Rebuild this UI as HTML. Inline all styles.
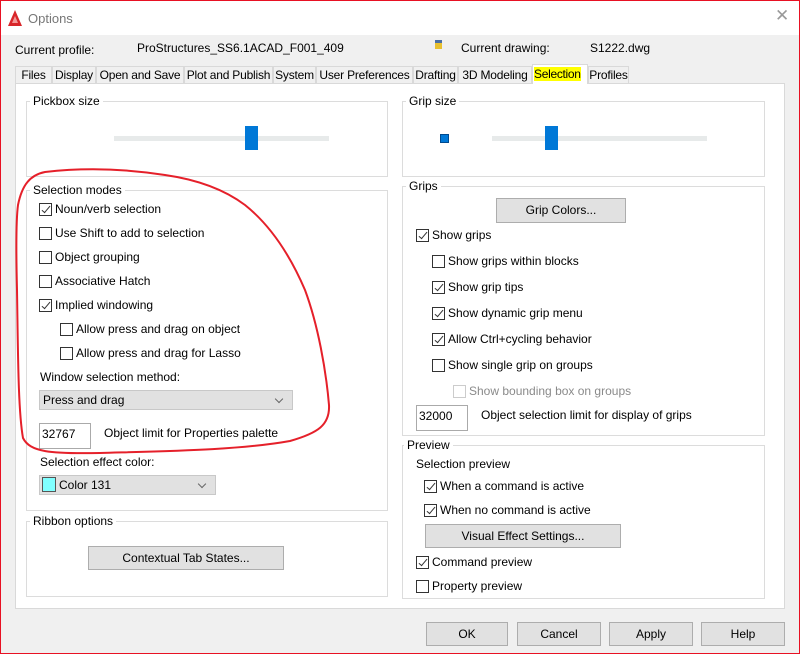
<!DOCTYPE html>
<html><head><meta charset="utf-8"><style>
*{box-sizing:border-box;margin:0;padding:0}
body{width:800px;height:654px;position:relative;background:#f0f0f0;font-family:"Liberation Sans",sans-serif;font-size:12px;color:#000;overflow:hidden}
.a{position:absolute;white-space:nowrap}
.t{position:absolute;white-space:nowrap;line-height:14px}
.grp{position:absolute;border:1px solid #dcdcdc}
.gt{position:absolute;background:#fff;padding:0 3px;left:3px;top:-8px;line-height:14px}
.cb{position:absolute;width:13px;height:13px;border:1px solid #333;background:#fff}
.cb.c::after{content:"";position:absolute;left:4px;top:0px;width:3px;height:8px;border:solid #333;border-width:0 1px 1px 0;transform:rotate(40deg)}
.btn{position:absolute;background:#e1e1e1;border:1px solid #adadad;text-align:center}
.tb{position:absolute;background:#fff;border:1px solid #7a7a7a;padding:3px 2px;line-height:14px}
.dd{position:absolute;background:#e1e1e1;border:1px solid #c8c8c8;line-height:18px;padding-left:3px}
.dd::after{content:"";position:absolute;right:10px;top:5px;width:5px;height:5px;border:solid #666;border-width:0 1px 1px 0;transform:rotate(45deg)}
.tab{position:absolute;top:66px;height:18px;border:1px solid #d9d9d9;border-bottom:none;background:#f0f0f0;line-height:16px;text-align:center;white-space:nowrap;letter-spacing:-0.2px}
.trk{position:absolute;height:5px;background:#e7eaea}
.th{position:absolute;width:13px;height:24px;background:#0078d7}
</style></head><body>
<div class="a" style="left:0;top:0;width:800px;height:35px;background:#fff"></div>
<div class="a" style="left:0;top:0;width:800px;height:654px;border:1px solid #e81123;z-index:5;pointer-events:none"></div>
<svg class="a" style="left:8px;top:10px" width="14" height="16"><polygon points="7,0 14,16 0,16" fill="#d8262a"/><polygon points="7,6 10,13 4,13" fill="#f39999"/></svg>
<div class="t" style="left:28px;top:12px;font-size:13px;color:#777">Options</div>
<div class="t" style="left:775px;top:9px;font-size:17px;color:#999">✕</div>
<div class="t" style="left:15px;top:43px">Current profile:</div>
<div class="t" style="left:137px;top:41px">ProStructures_SS6.1ACAD_F001_409</div>
<div class="a" style="left:435px;top:40px;width:7px;height:9px;background:#e8c030;border-top:3px solid #4a6fa5"></div>
<div class="t" style="left:461px;top:41px">Current drawing:</div>
<div class="t" style="left:590px;top:41px">S1222.dwg</div>
<div class="tab" style="left:15px;width:37px">Files</div>
<div class="tab" style="left:52px;width:44px">Display</div>
<div class="tab" style="left:96px;width:88px">Open and Save</div>
<div class="tab" style="left:184px;width:89px">Plot and Publish</div>
<div class="tab" style="left:273px;width:43px">System</div>
<div class="tab" style="left:316px;width:97px">User Preferences</div>
<div class="tab" style="left:413px;width:45px">Drafting</div>
<div class="tab" style="left:458px;width:74px">3D Modeling</div>
<div class="a" style="left:532px;top:64px;width:56px;height:20px;background:#fff;border:1px solid #d9d9d9;border-bottom:none;z-index:2"></div>
<div class="t" style="left:534px;top:67px;background:#ffff00;z-index:3;letter-spacing:-0.3px">Selection</div>
<div class="tab" style="left:588px;width:41px">Profiles</div>
<div class="a" style="left:15px;top:83px;width:770px;height:526px;background:#fff;border:1px solid #d9d9d9"></div>

<div class="grp" style="left:26px;top:101px;width:362px;height:76px"><div class="gt">Pickbox size</div></div>
<div class="trk" style="left:114px;top:136px;width:215px"></div>
<div class="th" style="left:245px;top:126px"></div>

<div class="grp" style="left:26px;top:190px;width:362px;height:321px"><div class="gt">Selection modes</div></div>
<div class="cb c" style="left:39px;top:203px"></div><div class="t" style="left:55px;top:202px">Noun/verb selection</div>
<div class="cb" style="left:39px;top:227px"></div><div class="t" style="left:55px;top:226px">Use Shift to add to selection</div>
<div class="cb" style="left:39px;top:251px"></div><div class="t" style="left:55px;top:250px">Object grouping</div>
<div class="cb" style="left:39px;top:275px"></div><div class="t" style="left:55px;top:274px">Associative Hatch</div>
<div class="cb c" style="left:39px;top:299px"></div><div class="t" style="left:55px;top:298px">Implied windowing</div>
<div class="cb" style="left:60px;top:323px"></div><div class="t" style="left:76px;top:322px">Allow press and drag on object</div>
<div class="cb" style="left:60px;top:347px"></div><div class="t" style="left:76px;top:346px">Allow press and drag for Lasso</div>
<div class="t" style="left:40px;top:370px">Window selection method:</div>
<div class="dd" style="left:39px;top:390px;width:254px;height:20px">Press and drag</div>
<div class="tb" style="left:39px;top:423px;width:52px;height:26px;border-color:#aaa">32767</div>
<div class="t" style="left:104px;top:426px">Object limit for Properties palette</div>
<div class="t" style="left:40px;top:455px">Selection effect color:</div>
<div class="dd" style="left:39px;top:475px;width:177px;height:20px;padding-left:19px">Color 131</div>
<div class="a" style="left:42px;top:477px;width:14px;height:15px;background:#80ffff;border:1px solid #555"></div>

<div class="grp" style="left:26px;top:521px;width:362px;height:76px"><div class="gt">Ribbon options</div></div>
<div class="btn" style="left:88px;top:546px;width:196px;height:24px;line-height:22px">Contextual Tab States...</div>

<div class="grp" style="left:402px;top:101px;width:363px;height:76px"><div class="gt">Grip size</div></div>
<div class="a" style="left:440px;top:134px;width:9px;height:9px;background:#0078d7;border:1px solid #004a8f"></div>
<div class="trk" style="left:492px;top:136px;width:215px"></div>
<div class="th" style="left:545px;top:126px"></div>

<div class="grp" style="left:402px;top:186px;width:363px;height:250px"><div class="gt">Grips</div></div>
<div class="btn" style="left:496px;top:198px;width:130px;height:25px;line-height:23px">Grip Colors...</div>
<div class="cb c" style="left:416px;top:229px"></div><div class="t" style="left:432px;top:228px">Show grips</div>
<div class="cb" style="left:432px;top:255px"></div><div class="t" style="left:448px;top:254px">Show grips within blocks</div>
<div class="cb c" style="left:432px;top:281px"></div><div class="t" style="left:448px;top:280px">Show grip tips</div>
<div class="cb c" style="left:432px;top:307px"></div><div class="t" style="left:448px;top:306px">Show dynamic grip menu</div>
<div class="cb c" style="left:432px;top:333px"></div><div class="t" style="left:448px;top:332px">Allow Ctrl+cycling behavior</div>
<div class="cb" style="left:432px;top:359px"></div><div class="t" style="left:448px;top:358px">Show single grip on groups</div>
<div class="cb" style="left:453px;top:385px;border-color:#ccc"></div><div class="t" style="left:469px;top:384px;color:#8a8a8a">Show bounding box on groups</div>
<div class="tb" style="left:416px;top:405px;width:52px;height:26px;border-color:#aaa">32000</div>
<div class="t" style="left:481px;top:408px">Object selection limit for display of grips</div>

<div class="grp" style="left:402px;top:445px;width:363px;height:154px"><div class="gt" style="left:1px">Preview</div></div>
<div class="t" style="left:416px;top:457px">Selection preview</div>
<div class="cb c" style="left:424px;top:480px"></div><div class="t" style="left:440px;top:479px">When a command is active</div>
<div class="cb c" style="left:424px;top:504px"></div><div class="t" style="left:440px;top:503px">When no command is active</div>
<div class="btn" style="left:425px;top:524px;width:196px;height:24px;line-height:22px">Visual Effect Settings...</div>
<div class="cb c" style="left:416px;top:556px"></div><div class="t" style="left:432px;top:555px">Command preview</div>
<div class="cb" style="left:416px;top:580px"></div><div class="t" style="left:432px;top:579px">Property preview</div>

<div class="btn" style="left:426px;top:622px;width:82px;height:24px;line-height:22px">OK</div>
<div class="btn" style="left:517px;top:622px;width:84px;height:24px;line-height:22px">Cancel</div>
<div class="btn" style="left:609px;top:622px;width:84px;height:24px;line-height:22px">Apply</div>
<div class="btn" style="left:701px;top:622px;width:84px;height:24px;line-height:22px">Help</div>

<svg class="a" style="left:0;top:0;z-index:4" width="800" height="654"><path d="M18,205 C22,185 30,175 45,172 C80,168 120,168 165,175 C200,180 225,190 245,205 C270,225 290,255 305,290 C318,325 326,370 329,405 C330,425 318,433 290,441 C240,450 170,451 100,453 C50,454 30,452 23,438 C18,410 18,350 17,290 C16,250 16,220 18,205 Z" fill="none" stroke="#e5202a" stroke-width="2"/></svg>
</body></html>
